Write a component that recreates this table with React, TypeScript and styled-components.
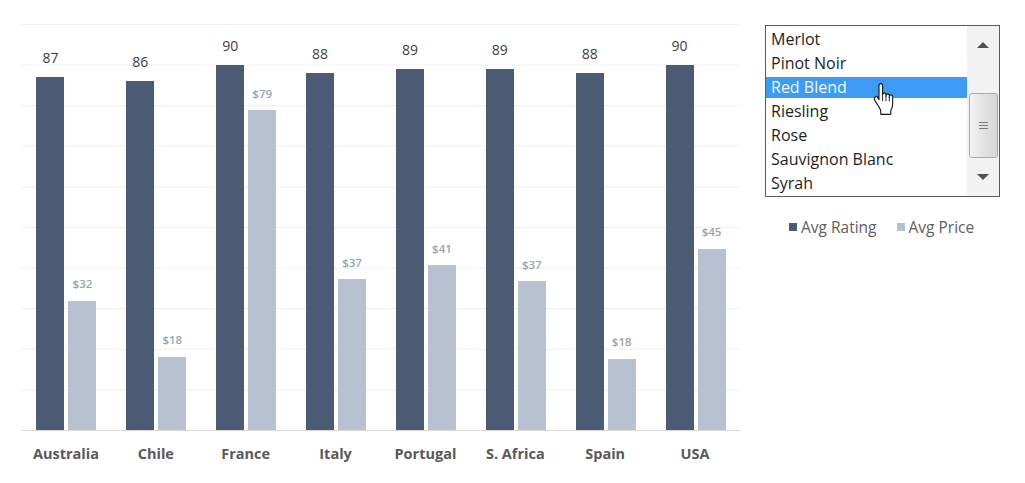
import React from 'react';
import styled, { createGlobalStyle } from 'styled-components';

type SeriesKind = 'rating' | 'price';

interface CountryRow {
  country: string;
  rating: number;
  price: number;
}

const data: CountryRow[] = [
  { country: 'Australia', rating: 87, price: 31.8 },
  { country: 'Chile', rating: 86, price: 18.1 },
  { country: 'France', rating: 90, price: 78.8 },
  { country: 'Italy', rating: 88, price: 37.1 },
  { country: 'Portugal', rating: 89, price: 40.6 },
  { country: 'S. Africa', rating: 89, price: 36.6 },
  { country: 'Spain', rating: 88, price: 17.5 },
  { country: 'USA', rating: 90, price: 44.6 },
];

const varieties = ['Merlot', 'Pinot Noir', 'Red Blend', 'Riesling', 'Rose', 'Sauvignon Blanc', 'Syrah'];

const PLOT_HEIGHT = 406;
const AXIS_MAX = 100;

const colors = {
  rating: '#4b5b73',
  price: '#b7c1d0',
  ratingLabel: '#404040',
  priceLabel: '#98a2b3',
  axisLabel: '#595959',
  grid: '#efefef',
  baseline: '#d9d9d9',
};

const GlobalStyle = createGlobalStyle`
  body {
    margin: 0;
    background: #ffffff;
    font-family: "Open Sans", "Liberation Sans", sans-serif;
  }
`;

const Page = styled.div`
  display: flex;
  align-items: flex-start;
  width: 1025px;
  height: 483px;
  padding: 24px 0 0 21px;
  box-sizing: border-box;
  overflow: hidden;
`;

const Chart = styled.div`
  width: 719px;
  display: flex;
  flex-direction: column;
`;

const Plot = styled.div`
  height: ${PLOT_HEIGHT}px;
  display: flex;
  border-bottom: 1px solid ${colors.baseline};
  background-image: linear-gradient(${colors.grid} 1px, transparent 1px);
  background-size: 100% ${PLOT_HEIGHT / 10}px;
`;

const Category = styled.div`
  flex: 1;
  display: flex;
  justify-content: center;
  align-items: flex-end;
  gap: 4px;
  padding-left: 1px;
`;

const Series = styled.div`
  width: 28px;
  display: flex;
  flex-direction: column;
  align-items: center;
`;

const ValueLabel = styled.span<{ $kind: SeriesKind }>`
  white-space: nowrap;
  line-height: 1;
  font-size: ${props => (props.$kind === 'rating' ? '14px' : '11.5px')};
  font-weight: ${props => (props.$kind === 'rating' ? 500 : 600)};
  color: ${props => (props.$kind === 'rating' ? colors.ratingLabel : colors.priceLabel)};
  margin-bottom: ${props => (props.$kind === 'rating' ? '12px' : '11px')};
`;

const Bar = styled.div<{ $kind: SeriesKind }>`
  width: 100%;
  background: ${props => colors[props.$kind]};
`;

const Axis = styled.div`
  display: flex;
  margin-top: 16px;
`;

const AxisLabel = styled.div`
  flex: 1;
  text-align: center;
  font-size: 14.5px;
  font-weight: 700;
  line-height: 1;
  color: ${colors.axisLabel};
`;

const Side = styled.div`
  display: flex;
  flex-direction: column;
  margin: 1px 0 0 25px;
`;

const ListBox = styled.div`
  position: relative;
  width: 235px;
  height: 172px;
  box-sizing: border-box;
  border: 1px solid #5a5a5a;
  display: flex;
  background: #ffffff;
`;

const Items = styled.ul`
  flex: 1;
  margin: 0;
  padding: 3px 0 0;
  list-style: none;
`;

const Item = styled.li<{ $selected?: boolean }>`
  height: 21px;
  margin-bottom: 3px;
  padding-left: 5px;
  line-height: 21px;
  font-size: 16px;
  white-space: nowrap;
  color: ${props => (props.$selected ? '#f2f8ff' : '#1e1e1e')};
  background: ${props => (props.$selected ? '#3d9bf3' : 'transparent')};
`;

const Scrollbar = styled.div`
  width: 32px;
  display: flex;
  flex-direction: column;
  background: #f2f2f2;
`;

const ScrollButton = styled.div`
  height: 38px;
  display: flex;
  align-items: center;
  justify-content: center;
`;

const Arrow = styled.span<{ $dir: 'up' | 'down' }>`
  width: 0;
  height: 0;
  border-left: 6px solid transparent;
  border-right: 6px solid transparent;
  ${props =>
    props.$dir === 'up'
      ? 'border-bottom: 6px solid #505050;'
      : 'border-top: 6px solid #505050;'}
`;

const Track = styled.div`
  flex: 1;
  display: flex;
  flex-direction: column;
  justify-content: flex-end;
  align-items: center;
`;

const Thumb = styled.div`
  width: 29px;
  height: 65px;
  box-sizing: border-box;
  border: 1px solid #a9a9a9;
  border-radius: 3px;
  background: linear-gradient(90deg, #f4f4f4 0%, #e2e2e2 50%, #d6d6d6 100%);
  display: flex;
  flex-direction: column;
  align-items: center;
  justify-content: center;
  gap: 2px;
`;

const Grip = styled.span`
  width: 9px;
  height: 1px;
  background: #7a7a7a;
`;

const Cursor = styled.svg`
  position: absolute;
  left: 107px;
  top: 57px;
`;

const Legend = styled.div`
  display: flex;
  align-items: center;
  gap: 20px;
  margin: 20px 0 0 24px;
`;

const LegendItem = styled.div`
  display: flex;
  align-items: center;
  gap: 4px;
  font-size: 15.5px;
  line-height: 20px;
  color: #606060;
`;

const Swatch = styled.span<{ $kind: SeriesKind }>`
  width: 8px;
  height: 8px;
  background: ${props => colors[props.$kind]};
`;

const barHeight = (value: number) => `${(value / AXIS_MAX) * PLOT_HEIGHT}px`;

const HandCursor: React.FC = () => (
  <Cursor width="21" height="32" viewBox="0 0 17.5 23" preserveAspectRatio="none">
    <path
      d="M5 2 a1.5 1.5 0 0 1 3 0 V8.5 a1.4 1.4 0 0 1 2.8 0 V9.3 a1.4 1.4 0 0 1 2.8 0 V10 a1.4 1.4 0 0 1 2.8 0 V15 c0 2.5 -0.8 3.8 -1.6 5 V22.5 H6.5 V20.5 c0 -1 -0.5 -1.8 -1.2 -2.8 L1.4 12.3 c-0.6 -0.8 -0.4 -1.8 0.3 -2.3 c0.7 -0.5 1.7 -0.3 2.3 0.4 L5 12 Z"
      fill="#ffffff"
      stroke="#111111"
      strokeWidth="0.9"
      strokeLinejoin="round"
    />
    <path d="M8 8.5 V13 M10.8 9.3 V13 M13.6 10 V13" stroke="#111111" strokeWidth="0.7" fill="none" />
  </Cursor>
);

export default function App() {
  return (
    <>
      <GlobalStyle />
      <Page>
        <Chart>
          <Plot>
            {data.map(row => (
              <Category key={row.country}>
                <Series>
                  <ValueLabel $kind="rating">{row.rating}</ValueLabel>
                  <Bar $kind="rating" style={{ height: barHeight(row.rating) }} />
                </Series>
                <Series>
                  <ValueLabel $kind="price">${Math.round(row.price)}</ValueLabel>
                  <Bar $kind="price" style={{ height: barHeight(row.price) }} />
                </Series>
              </Category>
            ))}
          </Plot>
          <Axis>
            {data.map(row => (
              <AxisLabel key={row.country}>{row.country}</AxisLabel>
            ))}
          </Axis>
        </Chart>
        <Side>
          <ListBox>
            <Items>
              {varieties.map(name => (
                <Item key={name} $selected={name === 'Red Blend'}>
                  {name}
                </Item>
              ))}
            </Items>
            <Scrollbar>
              <ScrollButton>
                <Arrow $dir="up" />
              </ScrollButton>
              <Track>
                <Thumb>
                  <Grip />
                  <Grip />
                  <Grip />
                </Thumb>
              </Track>
              <ScrollButton>
                <Arrow $dir="down" />
              </ScrollButton>
            </Scrollbar>
            <HandCursor />
          </ListBox>
          <Legend>
            <LegendItem>
              <Swatch $kind="rating" />
              Avg Rating
            </LegendItem>
            <LegendItem>
              <Swatch $kind="price" />
              Avg Price
            </LegendItem>
          </Legend>
        </Side>
      </Page>
    </>
  );
}
